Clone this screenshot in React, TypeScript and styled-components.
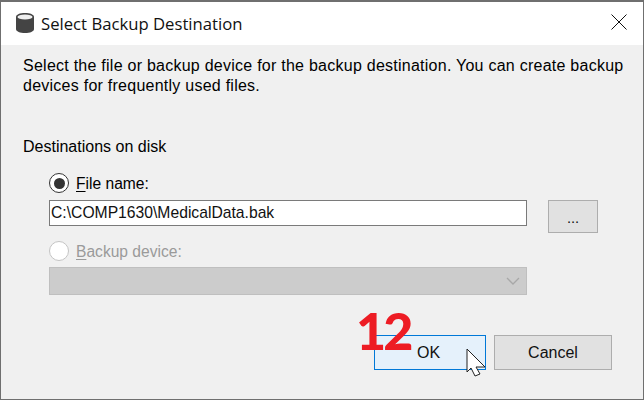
import React from "react";
import styled, { createGlobalStyle } from "styled-components";

const Global = createGlobalStyle`
  html, body { margin: 0; padding: 0; background: #f0f0f0; }
  #root { width: 644px; height: 400px; }
`;

const Window = styled.div`
  position: relative;
  box-sizing: border-box;
  width: 644px;
  height: 400px;
  overflow: hidden;
  display: flex;
  flex-direction: column;
  background: #f0f0f0;
  border: 1px solid #6f6f6f;
  font-family: "Liberation Sans", Arial, sans-serif;
  font-size: 16px;
  color: #000;
`;

const TitleBar = styled.header`
  height: 44px;
  flex: none;
  background: #fff;
  display: flex;
  align-items: center;
  padding: 0 16px 3px 14px;
  border-top: 1px solid #6f6f6f;
  box-sizing: border-box;
`;

const Title = styled.h1`
  margin: 2px 0 0 6px;
  flex: 1;
  font-family: "Open Sans", sans-serif;
  font-weight: 400;
  font-size: 16.7px;
  color: #111;
  white-space: nowrap;
`;

const Content = styled.main`
  flex: 1;
  display: flex;
  flex-direction: column;
  padding: 11px 0 0 22px;
  min-height: 0;
`;

const Description = styled.p`
  margin: 0;
  line-height: 20px;
  width: 610px;
  letter-spacing: 0.25px;
`;

const Section = styled.div`
  margin-top: 41px;
  line-height: 20px;
`;

const Options = styled.div`
  margin: 16px 0 0 26px;
  display: flex;
  flex-direction: column;
`;

const OptionRow = styled.label<{ $disabled?: boolean }>`
  display: flex;
  align-items: center;
  gap: 7px;
  height: 20px;
  font-size: 15.6px;
  color: ${(p) => (p.$disabled ? "#9a9a9a" : "#000")};
`;

const OptionText = styled.span`
  padding-top: 2px;
`;

const Radio = styled.span<{ $checked?: boolean; $disabled?: boolean }>`
  box-sizing: border-box;
  width: 20px;
  height: 20px;
  border-radius: 50%;
  flex: none;
  background: #fff;
  border: 1.5px solid ${(p) => (p.$disabled ? "#c4c4c4" : "#333")};
  display: flex;
  align-items: center;
  justify-content: center;
  &::after {
    content: "";
    width: 11px;
    height: 11px;
    border-radius: 50%;
    background: ${(p) => (p.$checked ? "#333" : "transparent")};
  }
`;

const Mnemonic = styled.span`
  text-decoration: underline;
  text-underline-offset: 2px;
`;

const FileRow = styled.div`
  display: flex;
  align-items: flex-start;
  margin-top: 7px;
  height: 41px;
  gap: 21px;
`;

const FileInput = styled.div`
  box-sizing: border-box;
  width: 478px;
  height: 26px;
  border: 1.5px solid #7a7a7a;
  background: #fff;
  display: flex;
  align-items: center;
  padding-left: 1px;
  font-size: 15.7px;
  color: #111;
`;

const Button = styled.div<{ $primary?: boolean; $width: number }>`
  box-sizing: border-box;
  width: ${(p) => p.$width}px;
  height: 35px;
  flex: none;
  display: flex;
  align-items: center;
  justify-content: center;
  padding-right: ${(p) => (p.$primary ? "3px" : "0")};
  background: ${(p) => (p.$primary ? "#e5f1fb" : "#e1e1e1")};
  border: 1px solid ${(p) => (p.$primary ? "#0078d7" : "#adadad")};
  color: #111;
`;

const BrowseButton = styled(Button)`
  height: 33px;
  padding-top: 3px;
  font-size: 14.67px;
`;

const SelectBox = styled.div`
  box-sizing: border-box;
  width: 478px;
  height: 28px;
  margin-top: 6px;
  background: #cccccc;
  border: 1px solid #bfbfbf;
  display: flex;
  align-items: center;
  justify-content: flex-end;
  padding-right: 6px;
`;

const Actions = styled.div`
  display: flex;
  gap: 8px;
  margin: 40px 0 0 351px;
`;

const Badge = styled.span`
  position: absolute;
  left: 355px;
  top: 297px;
  font-family: "Lato", sans-serif;
  font-weight: 900;
  font-size: 52px;
  line-height: 64px;
  letter-spacing: -3px;
  color: #ed1c24;
`;

const Cursor = styled.svg`
  position: absolute;
  left: 463px;
  top: 345px;
`;

export default function App() {
  return (
    <>
      <Global />
      <Window>
        <TitleBar>
          <svg width="20" height="21" viewBox="0 0 20 21">
            <path d="M1 5C1 2.5 5 1 10 1s9 1.5 9 4v12c0 2.5-4 4-9 4s-9-1.5-9-4z" fill="#444" />
            <ellipse cx="10" cy="5" rx="7.5" ry="2.6" fill="#eee" />
          </svg>
          <Title>Select Backup Destination</Title>
          <svg width="16" height="16" viewBox="0 0 16 16">
            <path d="M.5.5l15 15M15.5.5l-15 15" stroke="#111" strokeWidth="1" fill="none" />
          </svg>
        </TitleBar>
        <Content>
          <Description>
            Select the file or backup device for the backup destination. You can create backup devices for frequently used files.
          </Description>
          <Section>Destinations on disk</Section>
          <Options>
            <OptionRow>
              <Radio $checked />
              <OptionText><Mnemonic>F</Mnemonic>ile name:</OptionText>
            </OptionRow>
            <FileRow>
              <FileInput>C:\COMP1630\MedicalData.bak</FileInput>
              <BrowseButton $width={50}>...</BrowseButton>
            </FileRow>
            <OptionRow $disabled>
              <Radio $disabled />
              <OptionText><Mnemonic>B</Mnemonic>ackup device:</OptionText>
            </OptionRow>
            <SelectBox>
              <svg width="14" height="8" viewBox="0 0 14 8">
                <path d="M1 1l6 6 6-6" stroke="#a8a8a8" strokeWidth="1.3" fill="none" />
              </svg>
            </SelectBox>
          </Options>
          <Actions>
            <Button $primary $width={112}>OK</Button>
            <Button $width={118}>Cancel</Button>
          </Actions>
        </Content>
        <Badge>12</Badge>
        <Cursor width="24" height="32" viewBox="0 0 24 32">
          <path d="M3 3v23l4-4 4 8 5-2-4-7h9z" fill="#fff" stroke="#222" strokeWidth="1" strokeLinejoin="round" />
        </Cursor>
      </Window>
    </>
  );
}
